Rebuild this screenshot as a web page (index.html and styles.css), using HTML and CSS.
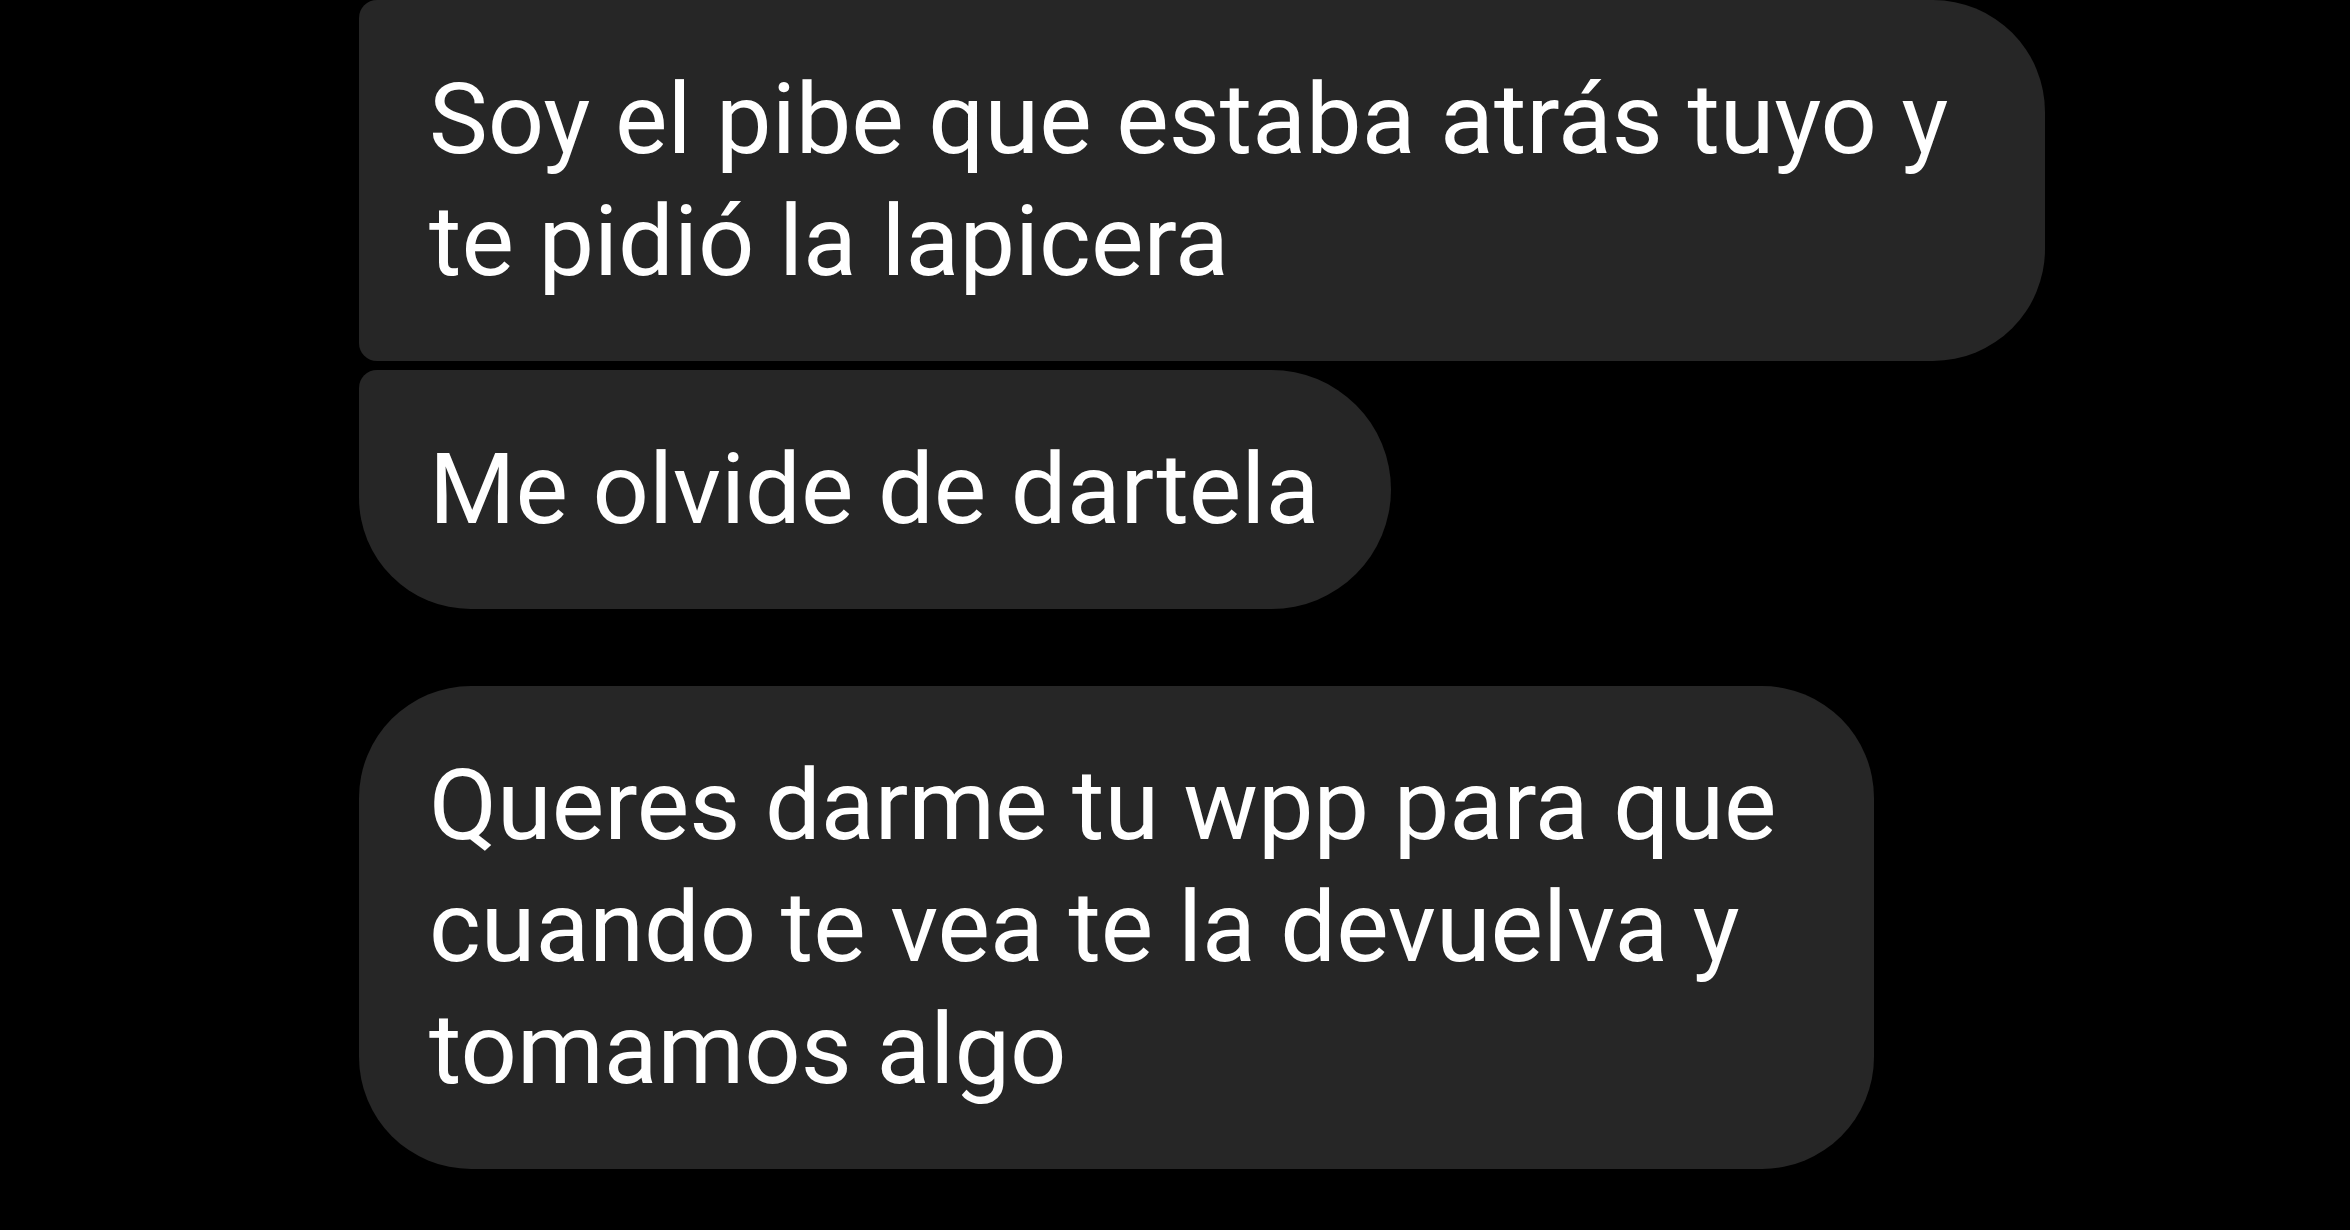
FILE: index.html
```html
<!DOCTYPE html>
<html lang="es">
<head>
    <meta charset="UTF-8">
    <meta name="viewport" content="width=device-width, initial-scale=1.0">
    <title>Mensajes</title>
    <link rel="stylesheet" href="styles.css">
</head>
<body>
    <div class="thread">
        <div class="group">
            <div class="bubble bubble-middle bubble-wrapped">
                Soy el pibe que estaba atrás tuyo y<br>te pidió la lapicera
            </div>
            <div class="bubble bubble-last">
                Me olvide de dartela
            </div>
        </div>

        <div class="group">
            <div class="bubble bubble-single bubble-wrapped">
                Queres darme tu wpp para que<br>cuando te vea te la devuelva y<br>tomamos algo
            </div>
        </div>
    </div>
</body>
</html>
```

FILE: styles.css
```css
* {
    margin: 0;
    padding: 0;
    box-sizing: border-box;
}

body {
    background: #000;
    color: #fff;
    font-family: Roboto, 'Noto Sans', sans-serif;
    min-height: 100vh;
    overflow: hidden;
}

.thread {
    display: flex;
    flex-direction: column;
    gap: 77px;
    padding-left: 359px;
}

.group {
    display: flex;
    flex-direction: column;
    align-items: flex-start;
    gap: 9px;
}

.bubble {
    background: #262626;
    font-size: 99px;
    line-height: 122px;
    padding: 58px 72px 59px 70px;
    white-space: nowrap;
}

.bubble-wrapped {
    padding-right: 97px;
}

.bubble-middle {
    border-radius: 18px 112px 112px 18px;
}

.bubble-last {
    border-radius: 18px 120px 120px 112px;
}

.bubble-single {
    border-radius: 112px;
}
```
